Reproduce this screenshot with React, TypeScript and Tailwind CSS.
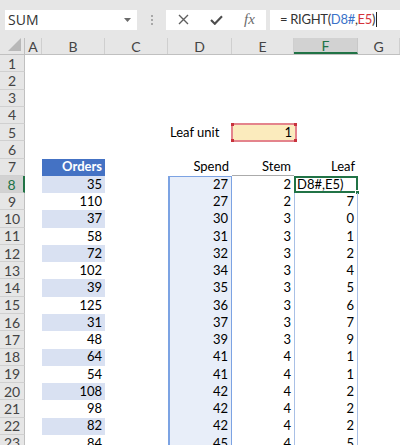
import React from "react";

const ROW_H = "h-[17.27px]";

const orders = [35, 110, 37, 58, 72, 102, 39, 125, 31, 48, 64, 54, 108, 98, 82, 84];
const spend = [27, 27, 30, 31, 32, 34, 35, 36, 37, 39, 41, 41, 42, 42, 42, 45];
const stem = [2, 2, 3, 3, 3, 3, 3, 3, 3, 3, 4, 4, 4, 4, 4, 4];
const leaf = [null, 7, 0, 1, 2, 4, 5, 6, 7, 9, 1, 1, 2, 2, 2, 5];

const cols = [
  { key: "A", w: "w-[17px]" },
  { key: "B", w: "w-[63px]" },
  { key: "C", w: "w-[63px]" },
  { key: "D", w: "w-[64px]" },
  { key: "E", w: "w-[62px]" },
  { key: "F", w: "w-[64px]" },
  { key: "G", w: "flex-1" },
];

function FormulaBar() {
  return (
    <div className="flex items-center h-[38px] bg-[#e6e6e6] pt-[1px]">
      {/* name box */}
      <div className="ml-[5px] w-[132px] h-[20px] bg-white flex items-center justify-between pl-[3px] pr-[6px]">
        <span className="text-[14px] text-[#333] font-['Open_Sans',sans-serif]">SUM</span>
        <svg width="7" height="4" viewBox="0 0 7 4">
          <path d="M0 0h7L3.5 4z" fill="#6b6b6b" />
        </svg>
      </div>
      {/* grip dots */}
      <div className="w-[29px] flex flex-col items-center gap-[2px]">
        <span className="w-[2px] h-[2px] bg-[#a8a8a8]" />
        <span className="w-[2px] h-[2px] bg-[#a8a8a8]" />
        <span className="w-[2px] h-[2px] bg-[#a8a8a8]" />
      </div>
      {/* buttons */}
      <div className="w-[100px] h-[20px] bg-white flex items-center">
        <div className="w-[34px] flex justify-center">
          <svg width="11" height="11" viewBox="0 0 11 11">
            <path d="M1 1l9 9M10 1l-9 9" stroke="#5f5f5f" strokeWidth="1.4" />
          </svg>
        </div>
        <div className="w-[33px] flex justify-center">
          <svg width="13" height="10" viewBox="0 0 13 10">
            <path d="M1 5l3.8 3.8L12 1.2" stroke="#4d4d4d" strokeWidth="2.1" fill="none" />
          </svg>
        </div>
        <div className="w-[33px] flex justify-center">
          <span className="text-[15px] italic text-[#6b6b6b] font-['Liberation_Serif',serif] leading-none">
            fx
          </span>
        </div>
      </div>
      {/* formula */}
      <div className="ml-[4px] flex-1 h-[20px] bg-white flex items-center pl-[10px]">
        <span className="text-[13px] tracking-[-0.3px] text-[#333] font-['Lato',sans-serif] whitespace-pre">
          {"= RIGHT("}
          <span className="text-[#3a72c9]">D8#</span>
          {","}
          <span className="text-[#d5323b]">E5</span>
          {")"}
        </span>
        <span className="ml-[1px] w-[1px] h-[15px] bg-[#222]" />
      </div>
    </div>
  );
}

function ColumnHeaders() {
  return (
    <div className="flex h-[17px] bg-[#e6e6e6] border-b border-[#c0c0c0]">
      <div className="w-[25px] border-r border-[#c0c0c0] relative">
        <svg className="absolute right-[3px] bottom-[3px]" width="13" height="13" viewBox="0 0 13 13">
          <path d="M13 0V13H0z" fill="#b8b8b8" />
        </svg>
      </div>
      {cols.map((c) =>
        c.key === "F" ? (
          <div
            key={c.key}
            className={`${c.w} bg-[#d2d2d2] border-b-2 border-[#217346] border-r border-r-[#c8c8c8] flex items-center justify-center text-[14px] text-[#217346]`}
          >
            F
          </div>
        ) : (
          <div
            key={c.key}
            className={`${c.w} border-r border-[#cfcfcf] flex items-center justify-center text-[14px] text-[#444]`}
          >
            {c.key}
          </div>
        )
      )}
    </div>
  );
}

function Row({ r }: { r: number }) {
  const i = r - 8;
  const data = r >= 8;
  const active = r === 8;

  let b: React.ReactNode = null;
  let bCls = "";
  if (r === 7) {
    b = "Orders";
    bCls = "bg-[#4472c4] text-white font-bold";
  } else if (data) {
    b = orders[i];
    bCls = r % 2 === 0 ? "bg-[#d9e1f2]" : "bg-white";
  }

  let dCls = "";
  let d: React.ReactNode = null;
  if (r === 5) {
    d = <span className="pl-[2px]">Leaf unit</span>;
  } else if (r === 7) {
    d = "Spend";
  } else if (data) {
    d = spend[i];
    dCls = "bg-[#e8eef9] border-l-2 border-r border-[#7ca3e3]" + (active ? " border-t" : "");
  }

  let e: React.ReactNode = null;
  let eCls = "";
  if (r === 5) {
    e = null;
  } else if (r === 7) {
    e = "Stem";
    eCls = "border-b border-[#ababab]";
  } else if (data) {
    e = stem[i];
  }

  let f: React.ReactNode = null;
  let fCls = "";
  if (r === 7) {
    f = "Leaf";
  } else if (active) {
    fCls = "border-2 border-[#217346] !justify-start";
    f = <span className="pl-[1px]">D8#,E5)</span>;
  } else if (data) {
    f = leaf[i];
    fCls = "border-l border-r border-[#a9c0e6]";
  }

  const cell = "flex items-center justify-end pr-[3px] overflow-visible whitespace-nowrap";

  return (
    <div className={`flex ${ROW_H} text-[13px] text-black font-['Lato',sans-serif]`}>
      <div
        className={`w-[25px] flex items-center justify-center text-[14px] border-b border-[#d0d0d0] ${
          active
            ? "bg-[#d2d2d2] text-[#217346] border-r-2 border-r-[#217346]"
            : "bg-[#e6e6e6] text-[#444] border-r border-r-[#c0c0c0]"
        }`}
      >
        {r}
      </div>
      <div className="w-[17px]" />
      <div className={`w-[63px] ${cell} ${bCls}`}>{b}</div>
      <div className="w-[63px]" />
      <div className={`w-[64px] ${cell} ${r === 5 ? "!justify-start" : ""} ${dCls}`}>{d}</div>
      <div className={`w-[62px] ${cell} ${eCls} relative`}>
        {r === 5 ? (
          <div className="absolute left-[-1px] top-[-1px] w-[66px] h-[19px] bg-[#fbebbd] border-2 border-[#e4848c] flex items-center justify-end pr-[3px]">
            1
            <span className="absolute left-[-2px] top-[-2px] w-[3px] h-[3px] bg-[#c8323c]" />
            <span className="absolute right-[-2px] top-[-2px] w-[3px] h-[3px] bg-[#c8323c]" />
            <span className="absolute left-[-2px] bottom-[-2px] w-[3px] h-[3px] bg-[#c8323c]" />
            <span className="absolute right-[-2px] bottom-[-2px] w-[3px] h-[3px] bg-[#c8323c]" />
          </div>
        ) : (
          e
        )}
      </div>
      <div className={`w-[64px] ${cell} ${fCls} relative`}>
        {f}
        {active && (
          <span className="absolute right-[-4px] bottom-[-4px] w-[5px] h-[5px] bg-[#217346] border border-white" />
        )}
      </div>
      <div className="flex-1" />
    </div>
  );
}

export default function App() {
  const rows = Array.from({ length: 23 }, (_, k) => k + 1);
  return (
    <div className="w-[400px] h-[445px] overflow-hidden bg-white font-['Lato',sans-serif]">
      <FormulaBar />
      <ColumnHeaders />
      {rows.map((r) => (
        <Row key={r} r={r} />
      ))}
    </div>
  );
}
